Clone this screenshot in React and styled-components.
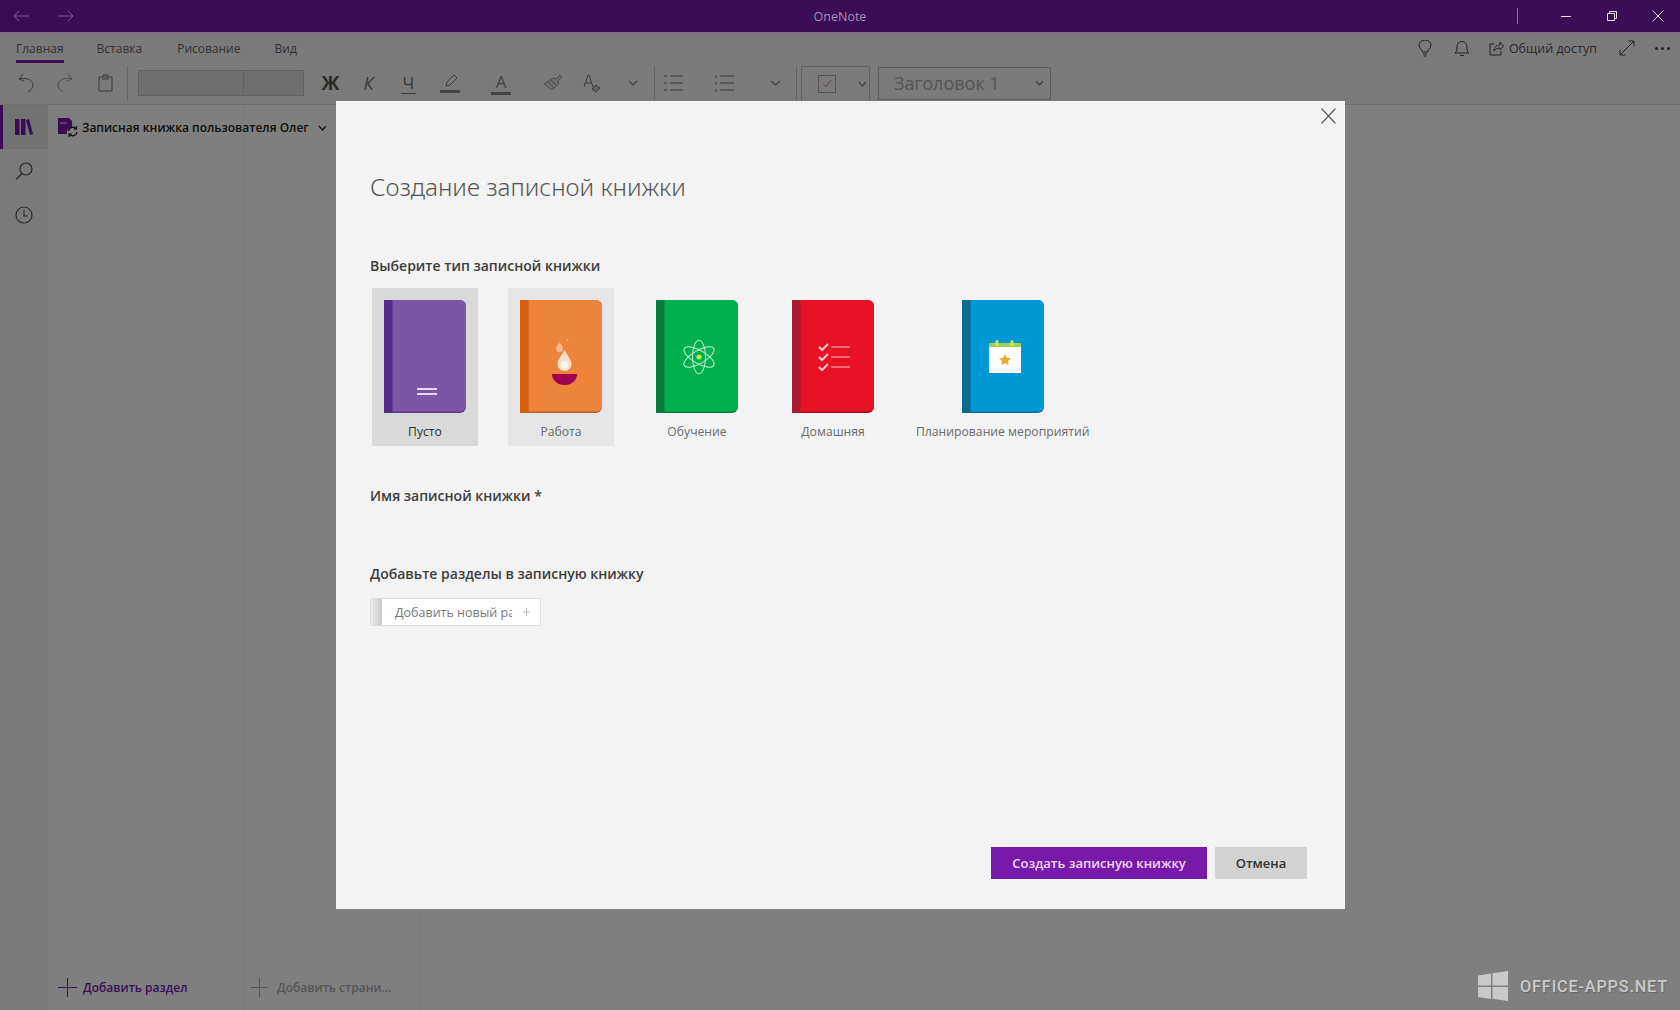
import styled, { createGlobalStyle } from "styled-components";

const font = `"Open Sans", "Noto Sans", "Liberation Sans", sans-serif`;

const App = () => {
    return (
        <Page>
            <GlobalStyle />
            <TitleBar>
                <NavArrow viewBox="0 0 16 12"><path d="M16 6H1M6 1L1 6l5 5" /></NavArrow>
                <NavArrow $ml={29} viewBox="0 0 16 12"><path d="M0 6h15M10 1l5 5-5 5" /></NavArrow>
                <AppName>OneNote</AppName>
                <TitleSep />
                <WinButton $ml={43} width="10" height="10" viewBox="0 0 10 10"><path d="M0 5.500h10" /></WinButton>
                <WinButton $ml={36} width="10" height="10" viewBox="0 0 10 10"><path d="M.5 2.500h7v7h-7zM2.500 2.500v-2h7v7h-2" /></WinButton>
                <WinButton $ml={35} width="12" height="12" viewBox="0 0 12 12"><path d="M.5.5l11 11M11.500.5l-11 11" /></WinButton>
            </TitleBar>

            <Ribbon>
                <TabRow>
                    <Tab $active>Главная</Tab>
                    <Tab $ml={33}>Вставка</Tab>
                    <Tab $ml={35}>Рисование</Tab>
                    <Tab $ml={34}>Вид</Tab>
                    <TabActions>
                        <ActionIcon width="14" height="17" viewBox="0 0 14 17">
                            <path d="M4.500 12c0-2.500-3.500-3.500-3.500-7a6 5 0 0 1 12 0c0 3.500-3.500 4.500-3.500 7zM5 14h4M5.500 16h3" />
                        </ActionIcon>
                        <ActionIcon $ml={22} width="16" height="17" viewBox="0 0 16 17">
                            <path d="M1 13c2-1.500 2-3 2-6a5 5.500 0 0 1 10 0c0 3 0 4.500 2 6zM6 15.500h4" />
                        </ActionIcon>
                        <ActionIcon $ml={19} width="15" height="16" viewBox="0 0 15 16">
                            <path d="M5 4H1v11h11v-4M5 11c0-4 3-6 6-6V2l3.500 4-3.500 4V8c-2.500 0-4.500 1-6 3z" />
                        </ActionIcon>
                        <ShareLabel>Общий доступ</ShareLabel>
                        <ActionIcon $ml={22} width="16" height="16" viewBox="0 0 16 16">
                            <path d="M1 15L15 1M9.500 1H15v5.500M1 9.500V15h5.500" />
                        </ActionIcon>
                        <Dots>
                            <i /><i /><i />
                        </Dots>
                    </TabActions>
                </TabRow>
                <ToolRow>
                    <ToolIcon $ml={18} width="16" height="20" viewBox="0 0 16 20"><path d="M5 1L1 6l5 2M1 6c7-2 14 1 14 6 0 3-2 5-5 7" /></ToolIcon>
                    <ToolIcon $ml={23} $faint width="16" height="20" viewBox="0 0 16 20"><path d="M11 1l4 5-5 2M15 6C8 4 1 7 1 12c0 3 2 5 5 7" /></ToolIcon>
                    <ToolIcon $ml={25} width="15" height="18" viewBox="0 0 15 18"><path d="M1 3h13v14H1zM5 3V1h5v2M4 5h7" /></ToolIcon>
                    <ToolSep $ml={14} />
                    <FontBox>
                        <FontName />
                        <FontSize />
                    </FontBox>
                    <BoldMark>Ж</BoldMark>
                    <ItalicMark>К</ItalicMark>
                    <UnderMark>Ч</UnderMark>
                    <ToolIcon $ml={24} width="20" height="22" viewBox="0 0 20 22">
                        <path d="M6 14l1-4 7-7 3 3-7 7z" />
                        <rect x="0" y="18" width="20" height="3" fill="#888" stroke="none" />
                    </ToolIcon>
                    <TextColorMark>A</TextColorMark>
                    <ToolIcon $ml={32} $faint width="20" height="18" viewBox="0 0 20 18">
                        <path d="M1 10l9-6 3 1 4-4 2 2-4 4 .5 3L9 16z" fill="#dcdcdc" />
                        <path d="M5 8l6 6M8 6l5 5" />
                    </ToolIcon>
                    <ToolIcon $ml={20} width="18" height="20" viewBox="0 0 18 20">
                        <path d="M1 14L5 2h1l4 12M2.500 10h6" />
                        <path d="M9 16l4-4 4 3-4 4z" fill="#c4c4c4" />
                    </ToolIcon>
                    <Chevron $ml={27} width="10" height="6" viewBox="0 0 10 6"><path d="M1 1l4 4 4-4" /></Chevron>
                    <ToolSep $ml={16} />
                    <ToolIcon $ml={9} width="19" height="18" viewBox="0 0 19 18"><path d="M6 2h13M6 9h13M6 16h13M0 2h3M0 9h3M0 16h3" /></ToolIcon>
                    <ToolIcon $ml={32} width="19" height="18" viewBox="0 0 19 18"><path d="M5 2h14M5 9h14M5 16h14M1 1v3M1 8v3M1 15v3" /></ToolIcon>
                    <Chevron $ml={36} width="11" height="6" viewBox="0 0 11 6"><path d="M1 1l4.500 4 4.500-4" /></Chevron>
                    <ToolSep $ml={15} />
                    <CheckBox>
                        <svg width="18" height="18" viewBox="0 0 18 18">
                            <rect x=".5" y=".5" width="17" height="17" fill="none" stroke="#aaa" />
                            <path d="M5 9l3 3 5-7" fill="none" stroke="#c99" />
                        </svg>
                        <Chevron $ml={22} width="9" height="6" viewBox="0 0 9 6"><path d="M1 1l3.500 4 3.500-4" /></Chevron>
                    </CheckBox>
                    <HeadingBox>
                        <HeadingText>Заголовок 1</HeadingText>
                        <Chevron width="9" height="6" viewBox="0 0 9 6"><path d="M1 1l3.500 4 3.500-4" /></Chevron>
                    </HeadingBox>
                </ToolRow>
            </Ribbon>

            <Main>
                <Rail>
                    <RailItem $active>
                        <svg width="18" height="16" viewBox="0 0 18 16" fill="#7719aa">
                            <rect x="0" y="0" width="4.500" height="16" />
                            <rect x="6" y="0" width="4.500" height="16" />
                            <path d="M11 1l3-1 4 15-3 1z" />
                        </svg>
                    </RailItem>
                    <RailItem>
                        <RailIcon width="18" height="18" viewBox="0 0 18 18"><circle cx="11" cy="7" r="6" /><path d="M7 11.500L1 17.500" /></RailIcon>
                    </RailItem>
                    <RailItem>
                        <RailIcon width="18" height="18" viewBox="0 0 18 18"><circle cx="9" cy="9" r="8" /><path d="M9 4v6h4" /></RailIcon>
                    </RailItem>
                </Rail>
                <SectionColumn>
                    <NotebookPicker>
                        <svg width="21" height="19" viewBox="0 0 21 19">
                            <path d="M0 0h11l3 3v6a5.500 5.500 0 0 0-5 7H0z" fill="#7719aa" />
                            <path d="M2 5h7" stroke="#ddd" />
                            <path d="M10.500 13a4.500 4.500 0 0 1 8-2M19 14a4.500 4.500 0 0 1-8 2M18.500 8v3h-3M11 19v-3h3" stroke="#111" strokeWidth="1.200" fill="none" />
                        </svg>
                        <NotebookName>Записная книжка пользователя Олег</NotebookName>
                        <Chevron $ml={9} $dark width="9" height="6" viewBox="0 0 9 6"><path d="M1 1l3.500 4 3.500-4" /></Chevron>
                    </NotebookPicker>
                    <AddFooter $color="#7719aa" $gap={6}>
                        <PlusMark width="19" height="19" viewBox="0 0 19 19"><path d="M0 9.500h19M9.500 0v19" /></PlusMark>
                        Добавить раздел
                    </AddFooter>
                </SectionColumn>
                <PageColumn>
                    <AddFooter $color="#aeaeae" $ml={7} $gap={9}>
                        <PlusMark width="17" height="19" viewBox="0 0 17 19"><path d="M0 9.500h17M8.500 0v19" /></PlusMark>
                        Добавить страни...
                    </AddFooter>
                </PageColumn>
                <Canvas />
            </Main>

            <Scrim />

            <Dialog>
                <DialogClose width="15" height="16" viewBox="0 0 15 16"><path d="M.5.5l14 15M14.500.5l-14 15" /></DialogClose>
                <DialogTitle>Создание записной книжки</DialogTitle>
                <SectionLabel $top={53}>Выберите тип записной книжки</SectionLabel>
                <TileRow>
                    <Tile $bg="#d9d9d9">
                        <Book body="#7d55a6" spine="#552b8b" edge="#5f3a8a">
                            <rect x="33" y="88" width="20" height="2" fill="#e6d8f0" />
                            <rect x="33" y="93" width="20" height="2" fill="#e6d8f0" />
                        </Book>
                        <TileLabel $selected>Пусто</TileLabel>
                    </Tile>
                    <Tile $bg="#e6e6e6">
                        <Book body="#ee833a" spine="#d75f0b" edge="#b5602a">
                            <path d="M44.500 50c3 6 7 9 7 14a7 7 0 0 1-14 0c0-5 4-8 7-14z" fill="#f6dcc6" />
                            <circle cx="44.500" cy="65" r="4" fill="#fff" opacity=".7" />
                            <path d="M39.500 42c2 3 3.500 4.500 3.500 6.500a3.500 3.500 0 0 1-7 0c0-2 1.500-3.500 3.500-6.500z" fill="#f4b88a" />
                            <circle cx="47.500" cy="40" r="1" fill="#f4b88a" />
                            <path d="M32 74h25c0 6-5 11-12.500 11S32 80 32 74z" fill="#a3004f" />
                        </Book>
                        <TileLabel>Работа</TileLabel>
                    </Tile>
                    <Tile>
                        <Book body="#00b04f" spine="#0a7a3b" edge="#07803c">
                            <g fill="none" stroke="#c9f2d4" strokeWidth="1">
                                <ellipse cx="43" cy="57" rx="6.500" ry="17" />
                                <ellipse cx="43" cy="57" rx="6.500" ry="17" transform="rotate(60 43 57)" />
                                <ellipse cx="43" cy="57" rx="6.500" ry="17" transform="rotate(120 43 57)" />
                            </g>
                            <circle cx="43" cy="57" r="2.500" fill="#c6e84a" />
                        </Book>
                        <TileLabel>Обучение</TileLabel>
                    </Tile>
                    <Tile>
                        <Book body="#e81224" spine="#a81a31" edge="#a8101f">
                            <g fill="none" stroke="#f8c9cd">
                                <path d="M27 47l3 3 6-6M27 57l3 3 6-6M27 67l3 3 6-6" strokeWidth="2" />
                                <path d="M39 47h19M39 57h19M39 67h19" strokeWidth="1" />
                            </g>
                        </Book>
                        <TileLabel>Домашняя</TileLabel>
                    </Tile>
                    <Tile>
                        <Book body="#0097d7" spine="#0b6b8f" edge="#0a6f9e">
                            <rect x="27" y="43" width="32" height="5" fill="#a6cf50" />
                            <rect x="33.500" y="40" width="3" height="6" rx="1.500" fill="#c8e86a" />
                            <rect x="48.500" y="40" width="3" height="6" rx="1.500" fill="#c8e86a" />
                            <rect x="27" y="47" width="32" height="26" fill="#fff" />
                            <path d="M43 54l1.800 3.800 4.200.5-3.100 2.800.8 4.100-3.700-2.100-3.700 2.100.8-4.100-3.100-2.800 4.200-.5z" fill="#eda72e" />
                        </Book>
                        <TileLabel>Планирование мероприятий</TileLabel>
                    </Tile>
                </TileRow>
                <SectionLabel $top={40}>Имя записной книжки *</SectionLabel>
                <SectionLabel $top={58}>Добавьте разделы в записную книжку</SectionLabel>
                <AddSection>
                    <SectionStripe />
                    <AddSectionText>Добавить новый раздел</AddSectionText>
                    <AddSectionPlus width="7" height="8" viewBox="0 0 7 8"><path d="M0 4h7M3.500 0v8" /></AddSectionPlus>
                </AddSection>
                <DialogActions>
                    <PrimaryButton>Создать записную книжку</PrimaryButton>
                    <SecondaryButton>Отмена</SecondaryButton>
                </DialogActions>
            </Dialog>

            <Watermark>
                <svg width="30" height="30" viewBox="0 0 30 30" fill="#c9c9c9">
                    <path d="M0 4.500l13-2v12H0zM14.500 2.200L30 0v14.500H14.500zM0 16h13v12L0 26zM14.500 16H30v14l-15.500-2.200z" />
                </svg>
                <WatermarkText>OFFICE-APPS.NET</WatermarkText>
            </Watermark>
        </Page>
    );
};

const Book = ({ body, spine, edge, children }) => (
    <svg width="82" height="113" viewBox="0 0 82 113">
        <path d="M0 0h76a6 6 0 0 1 6 6v101a6 6 0 0 1-6 6H0z" fill={edge} />
        <path d="M0 0h76a6 6 0 0 1 6 6v100a5.500 5.500 0 0 1-5.500 5.500H0z" fill={body} />
        <rect x="0" y="0" width="8.500" height="113" fill={spine} />
        {children}
    </svg>
);

const GlobalStyle = createGlobalStyle`
    html, body {
        margin: 0;
        padding: 0;
        width: 1680px;
        height: 1010px;
        overflow: hidden;
    }
    body {
        font-family: ${font};
    }
`;

const Page = styled.div`
    position: relative;
    width: 1680px;
    height: 1010px;
    display: flex;
    flex-direction: column;
    background: #ffffff;
    overflow: hidden;
`;

const TitleBar = styled.div`
    position: relative;
    z-index: 3;
    height: 32px;
    flex: none;
    display: flex;
    align-items: center;
    padding-left: 13px;
    background: #3b0d56;
`;

const NavArrow = styled.svg`
    width: 16px;
    height: 12px;
    margin-left: ${(p) => p.$ml || 0}px;
    fill: none;
    stroke: #7b5f90;
    stroke-width: 1;
`;

const AppName = styled.div`
    position: absolute;
    left: 0;
    right: 0;
    text-align: center;
    font-size: 12.500px;
    color: #a78fb8;
`;

const TitleSep = styled.div`
    width: 1px;
    height: 16px;
    margin-left: auto;
    background: #8a6fa0;
`;

const WinButton = styled.svg`
    flex: none;
    margin-left: ${(p) => p.$ml || 0}px;
    fill: none;
    stroke: #e8e0ee;
    stroke-width: 1;
    &:last-child {
        margin-right: 16px;
    }
`;

const Ribbon = styled.div`
    flex: none;
    height: 72px;
    background: linear-gradient(#ffe0ff, #f4f4f4 4px);
    border-bottom: 1px solid #dcdcdc;
`;

const TabRow = styled.div`
    height: 32px;
    display: flex;
    align-items: center;
    padding: 0 10px 0 16px;
`;

const Tab = styled.div`
    position: relative;
    margin-left: ${(p) => p.$ml || 0}px;
    font-size: 12px;
    line-height: 18px;
    padding-top: 1px;
    color: #666;
    &::after {
        content: "";
        display: ${(p) => (p.$active ? "block" : "none")};
        position: absolute;
        left: 0;
        right: 0;
        bottom: -5px;
        height: 3px;
        background: #7719aa;
    }
`;

const TabActions = styled.div`
    margin-left: auto;
    display: flex;
    align-items: center;
`;

const ActionIcon = styled.svg`
    margin-left: ${(p) => p.$ml || 0}px;
    fill: none;
    stroke: #444;
    stroke-width: 1;
`;

const ShareLabel = styled.div`
    margin-left: 5px;
    font-size: 12.500px;
    color: #555;
`;

const Dots = styled.div`
    margin-left: 20px;
    display: flex;
    gap: 3px;
    i {
        width: 3px;
        height: 3px;
        border-radius: 50%;
        background: #444;
    }
`;

const ToolRow = styled.div`
    height: 32px;
    margin-top: 3px;
    display: flex;
    align-items: center;
`;

const ToolIcon = styled.svg`
    flex: none;
    margin-left: ${(p) => p.$ml || 0}px;
    fill: none;
    stroke: ${(p) => (p.$faint ? "#999" : "#777")};
    stroke-width: 1;
`;

const ToolSep = styled.div`
    flex: none;
    width: 1px;
    height: 34px;
    margin-left: ${(p) => p.$ml || 0}px;
    background: #c8c8c8;
`;

const FontBox = styled.div`
    flex: none;
    width: 166px;
    height: 26px;
    margin-left: 10px;
    display: flex;
    box-sizing: border-box;
    border: 1px solid #c4c4c4;
    background: #dedede;
`;

const FontName = styled.div`
    width: 104px;
    border-right: 1px solid #c8c8c8;
`;

const FontSize = styled.div`
    flex: 1;
`;

const BoldMark = styled.div`
    flex: none;
    margin-left: 17px;
    width: 19px;
    font-size: 19px;
    font-weight: 700;
    color: #555;
    text-align: center;
`;

const ItalicMark = styled.div`
    flex: none;
    margin-left: 23px;
    width: 11px;
    font-size: 18px;
    font-style: italic;
    color: #777;
    text-align: center;
`;

const UnderMark = styled.div`
    flex: none;
    margin-left: 27px;
    width: 15px;
    font-size: 17px;
    line-height: 20px;
    color: #777;
    text-align: center;
    border-bottom: 1px solid #777;
`;

const TextColorMark = styled.div`
    flex: none;
    margin-left: 31px;
    width: 20px;
    font-size: 17px;
    line-height: 20px;
    color: #888;
    text-align: center;
    border-bottom: 3px solid #888;
`;

const Chevron = styled.svg`
    flex: none;
    margin-left: ${(p) => p.$ml || 0}px;
    fill: none;
    stroke: ${(p) => (p.$dark ? "#222" : "#888")};
    stroke-width: ${(p) => (p.$dark ? 1.3 : 1.200)};
`;

const CheckBox = styled.div`
    flex: none;
    width: 69px;
    height: 36px;
    margin-left: 4px;
    margin-top: 2px;
    padding-left: 16px;
    box-sizing: border-box;
    display: flex;
    align-items: center;
    border: 1px solid #c4c4c4;
`;

const HeadingBox = styled.div`
    flex: none;
    width: 173px;
    height: 33px;
    margin-left: 8px;
    padding: 0 6px 0 15px;
    box-sizing: border-box;
    display: flex;
    align-items: center;
    justify-content: space-between;
    border: 1px solid #b8b8b8;
`;

const HeadingText = styled.div`
    font-size: 18px;
    color: #aaa;
`;

const Main = styled.div`
    flex: 1;
    display: flex;
    min-height: 0;
`;

const Rail = styled.div`
    flex: none;
    width: 48px;
    background: #f4f4f4;
    display: flex;
    flex-direction: column;
`;

const RailItem = styled.div`
    height: 44px;
    display: flex;
    align-items: center;
    padding-left: ${(p) => (p.$active ? 12 : 15)}px;
    box-sizing: border-box;
    border-left: ${(p) => (p.$active ? "3px solid #7719aa" : "0")};
    background: ${(p) => (p.$active ? "#e4e4e4" : "transparent")};
`;

const RailIcon = styled.svg`
    fill: none;
    stroke: #555;
    stroke-width: 1.200;
`;

const SectionColumn = styled.div`
    flex: none;
    width: 195px;
    display: flex;
    flex-direction: column;
    border-right: 1px solid #f4f4f4;
`;

const NotebookPicker = styled.div`
    height: 45px;
    flex: none;
    width: 300px;
    display: flex;
    align-items: center;
    padding-left: 10px;
    white-space: nowrap;
`;

const NotebookName = styled.div`
    margin-left: 3px;
    font-size: 12px;
    font-weight: 600;
    color: #222;
`;

const AddFooter = styled.div`
    margin-top: auto;
    margin-left: ${(p) => p.$ml || 10}px;
    height: 32px;
    display: flex;
    align-items: flex-start;
    gap: ${(p) => p.$gap}px;
    font-size: 12px;
    line-height: 19px;
    font-weight: 600;
    white-space: nowrap;
    color: ${(p) => p.$color};
    stroke: ${(p) => p.$color};
`;

const PlusMark = styled.svg`
    flex: none;
    fill: none;
    stroke-width: 1;
`;

const PageColumn = styled.div`
    flex: none;
    width: 176px;
    display: flex;
    flex-direction: column;
    border-right: 1px solid #f4f4f4;
`;

const Canvas = styled.div`
    flex: 1;
`;

const Scrim = styled.div`
    position: absolute;
    inset: 0;
    z-index: 2;
    background: rgba(0, 0, 0, 0.5);
`;

const Dialog = styled.div`
    position: absolute;
    z-index: 4;
    left: 336px;
    top: 101px;
    width: 1009px;
    height: 808px;
    padding: 0 38px 30px 34px;
    box-sizing: border-box;
    display: flex;
    flex-direction: column;
    background: #f3f3f3;
    color: #333;
`;

const DialogClose = styled.svg`
    position: absolute;
    top: 7px;
    right: 9px;
    fill: none;
    stroke: #555;
    stroke-width: 1.100;
`;

const DialogTitle = styled.div`
    margin-top: 70px;
    font-family: "Noto Sans", "Open Sans", sans-serif;
    font-size: 24.300px;
    line-height: 32px;
    font-weight: 300;
    color: #555;
`;

const SectionLabel = styled.div`
    margin-top: ${(p) => p.$top}px;
    font-size: 14px;
    line-height: 20px;
    font-weight: 600;
    color: #3c3c3c;
`;

const TileRow = styled.div`
    margin-top: 12px;
    margin-left: 2px;
    display: flex;
    gap: 30px;
`;

const Tile = styled.div`
    min-width: 106px;
    height: 158px;
    padding-top: 12px;
    box-sizing: border-box;
    display: flex;
    flex-direction: column;
    align-items: center;
    background: ${(p) => p.$bg || "transparent"};
    svg {
        flex: none;
    }
`;

const TileLabel = styled.div`
    margin-top: 10px;
    font-size: 12.200px;
    line-height: 18px;
    white-space: nowrap;
    color: ${(p) => (p.$selected ? "#333" : "#6a6a6a")};
`;

const AddSection = styled.div`
    margin-top: 14px;
    width: 171px;
    height: 28px;
    box-sizing: border-box;
    display: flex;
    align-items: center;
    background: #ffffff;
    border: 1px solid #dcdcdc;
    border-radius: 2px;
`;

const SectionStripe = styled.div`
    flex: none;
    width: 11px;
    height: 100%;
    background: linear-gradient(to right, #ececec, #c9c9c9);
`;

const AddSectionText = styled.div`
    margin-left: 13px;
    width: 117px;
    overflow: hidden;
    white-space: nowrap;
    font-size: 12.500px;
    color: #777;
`;

const AddSectionPlus = styled.svg`
    margin-left: 11px;
    fill: none;
    stroke: #bbb;
`;

const DialogActions = styled.div`
    margin-top: auto;
    display: flex;
    justify-content: flex-end;
    gap: 8px;
`;

const PrimaryButton = styled.div`
    width: 216px;
    height: 32px;
    display: flex;
    align-items: center;
    justify-content: center;
    font-size: 13px;
    font-weight: 600;
    color: #f3d8fb;
    background: #7719aa;
`;

const SecondaryButton = styled.div`
    width: 92px;
    height: 32px;
    display: flex;
    align-items: center;
    justify-content: center;
    font-size: 13px;
    font-weight: 600;
    color: #333;
    background: #d2d2d2;
`;

const Watermark = styled.div`
    position: absolute;
    z-index: 3;
    right: 12px;
    bottom: 9px;
    display: flex;
    align-items: center;
    gap: 12px;
`;

const WatermarkText = styled.div`
    font-family: Roboto, "Open Sans", sans-serif;
    font-size: 16.300px;
    font-weight: 500;
    letter-spacing: 0.8px;
    color: #c9c9c9;
    text-shadow: 1px 1px 1px #666;
`;

export default App;
